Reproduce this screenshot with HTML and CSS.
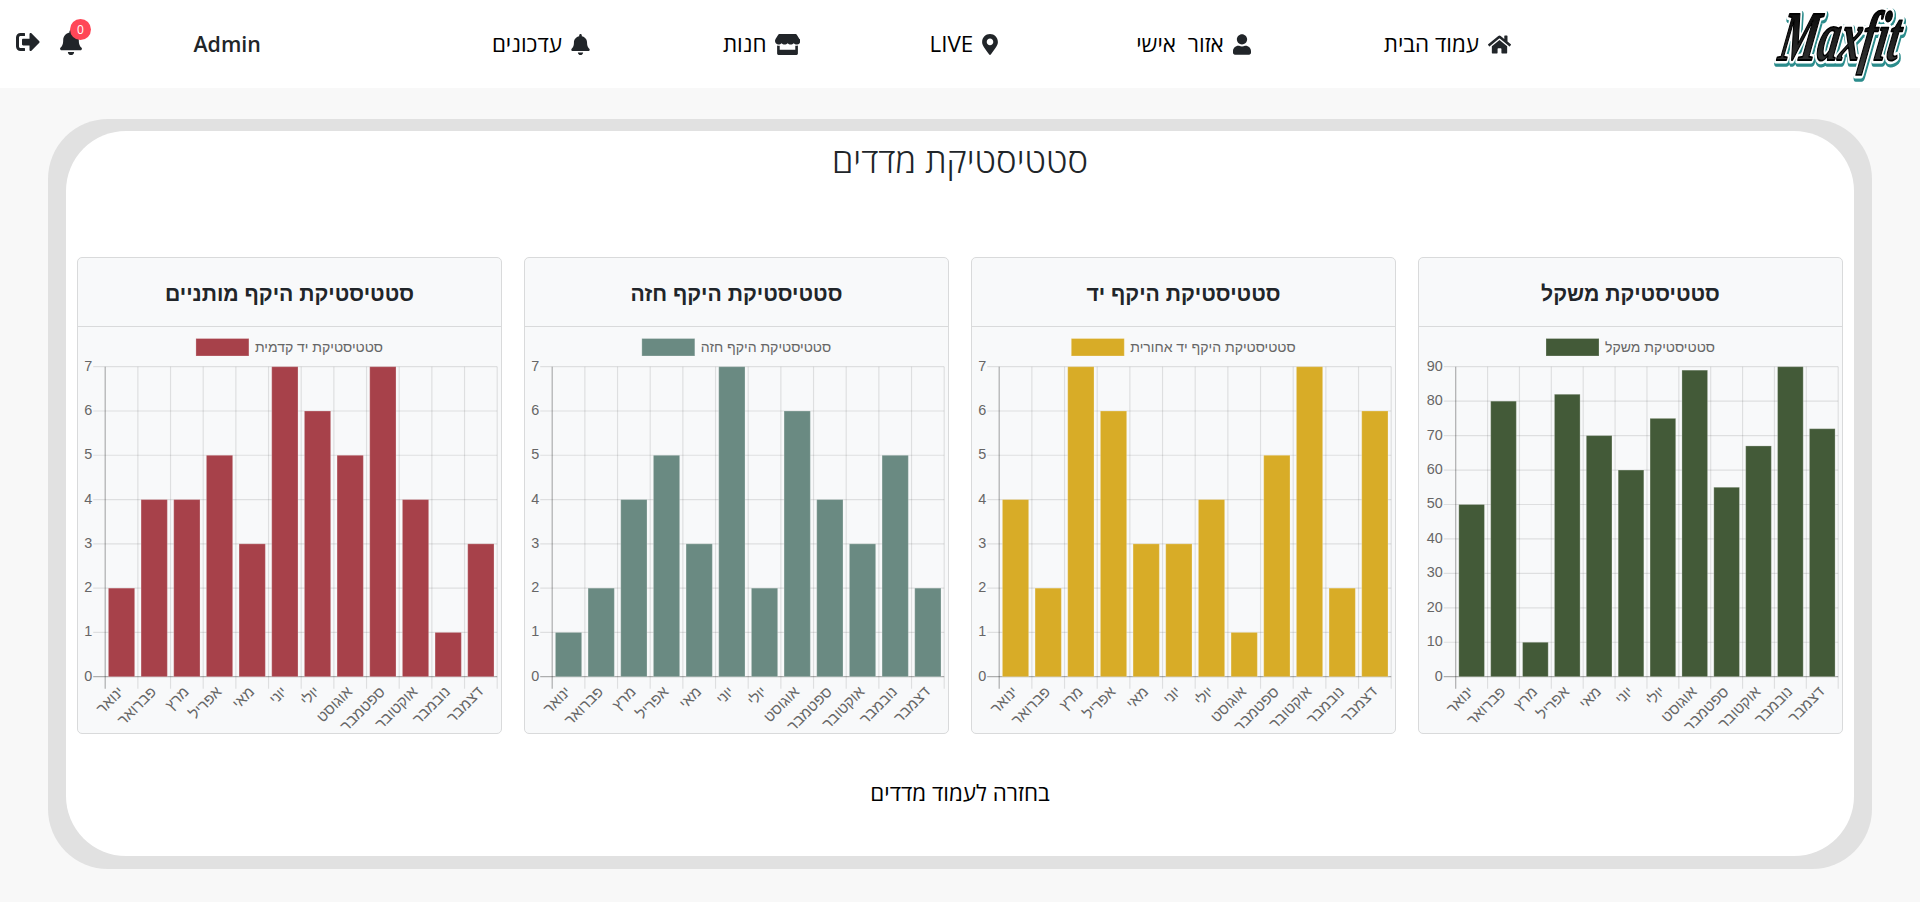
FILE: index.html
```html
<!DOCTYPE html>
<html lang="he" dir="rtl">
<head>
    <meta charset="UTF-8">
    <meta name="viewport" content="width=device-width, initial-scale=1.0">
    <title>סטטיסטיקת מדדים - Maxfit</title>
    <link rel="stylesheet" href="styles.css">
</head>
<body>

    <svg class="icon-defs" xmlns="http://www.w3.org/2000/svg">
        <symbol id="i-home" viewBox="0 0 576 512"><path d="M280.37 148.26L96 300.11V464a16 16 0 0 0 16 16l112.06-.29a16 16 0 0 0 15.92-16V368a16 16 0 0 1 16-16h64a16 16 0 0 1 16 16v95.64a16 16 0 0 0 16 16.05L464 480a16 16 0 0 0 16-16V300L295.67 148.26a12.19 12.19 0 0 0-15.3 0zM571.6 251.47L488 182.56V44.05a12 12 0 0 0-12-12h-56a12 12 0 0 0-12 12v72.61L318.47 43a48 48 0 0 0-61 0L4.34 251.47a12 12 0 0 0-1.6 16.9l25.5 31A12 12 0 0 0 45.15 301l235.22-193.74a12.19 12.19 0 0 1 15.3 0L530.9 301a12 12 0 0 0 16.9-1.6l25.5-31a12 12 0 0 0-1.7-16.93z"/></symbol>
        <symbol id="i-user" viewBox="0 0 448 512"><path d="M224 256c70.7 0 128-57.3 128-128S294.7 0 224 0 96 57.3 96 128s57.3 128 128 128zm89.6 32h-16.7c-22.2 10.2-46.9 16-72.9 16s-50.6-5.8-72.9-16h-16.7C60.2 288 0 348.2 0 422.4V464c0 26.5 21.5 48 48 48h352c26.5 0 48-21.5 48-48v-41.6c0-74.2-60.2-134.4-134.4-134.4z"/></symbol>
        <symbol id="i-marker" viewBox="0 0 384 512"><path d="M172.268 501.67C26.97 291.031 0 268.413 0 192 0 85.961 85.961 0 192 0s192 85.961 192 192c0 76.413-26.97 99.031-172.268 309.67-9.535 13.774-29.93 13.773-39.464 0zM192 272c44.183 0 80-35.817 80-80s-35.817-80-80-80-80 35.817-80 80 35.817 80 80 80z"/></symbol>
        <symbol id="i-store" viewBox="0 0 616 512"><path d="M602 118.6L537.1 15C531.3 5.7 521 0 510 0H106C95 0 84.7 5.7 78.9 15L14 118.6c-33.9 54.1-3.9 129.3 59.4 137.9 4.6.6 9.1.9 13.7.9 29.9 0 56.4-13.1 74.8-33.4 18.4 20.3 45 33.4 74.8 33.4 29.9 0 56.5-13.1 74.8-33.4 18.4 20.3 45 33.4 74.8 33.4 29.9 0 56.4-13.1 74.8-33.4 18.4 20.3 45 33.4 74.8 33.4 4.7 0 9.2-.3 13.7-.9 63.5-8.5 93.6-83.7 59.6-137.9zM529.5 288c-10 0-19.9-1.5-29.5-3.8V384H116v-99.8c-9.6 2.2-19.5 3.8-29.5 3.8-6 0-12.1-.4-18-1.2-5.6-.8-11.1-2.1-16.4-3.6V480c0 17.7 14.3 32 32 32h448c17.7 0 32-14.3 32-32V283.2c-5.4 1.6-10.8 2.9-16.4 3.6-6.1.8-12.1 1.2-18.2 1.2z"/></symbol>
        <symbol id="i-bell" viewBox="0 0 448 512"><path d="M224 512c35.32 0 63.97-28.65 63.97-64H160.03c0 35.35 28.65 64 63.97 64zm215.39-149.71c-19.32-20.76-55.47-51.99-55.47-154.29 0-77.7-54.48-139.9-127.94-155.16V32c0-17.67-14.32-32-31.98-32s-31.98 14.33-31.98 32v20.84C118.56 68.1 64.08 130.3 64.08 208c0 102.3-36.15 133.53-55.47 154.29-6 6.45-8.66 14.16-8.61 21.71.11 16.4 12.98 32 32.1 32h383.8c19.12 0 32-15.6 32.1-32 .05-7.55-2.61-15.27-8.61-21.71z"/></symbol>
        <symbol id="i-exit" viewBox="0 0 512 512"><path d="M497 273L329 441c-15 15-41 4.5-41-17v-96H152c-13.3 0-24-10.7-24-24v-96c0-13.3 10.7-24 24-24h136V88c0-21.4 25.9-32 41-17l168 168c9.3 9.4 9.3 24.6 0 34zM192 436v-40c0-6.6-5.4-12-12-12H96c-17.7 0-32-14.3-32-32V160c0-17.7 14.3-32 32-32h84c6.6 0 12-5.4 12-12V76c0-6.6-5.4-12-12-12H96c-53 0-96 43-96 96v192c0 53 43 96 96 96h84c6.6 0 12-5.4 12-12z"/></symbol>
    </svg>

    <header class="topbar">
        <a class="logo" href="#">
            <svg width="138" height="72" viewBox="0 0 138 72">
                <defs>
                    <linearGradient id="logoFill" x1="0" y1="0" x2="0" y2="1">
                        <stop offset="0" stop-color="#000"/>
                        <stop offset="1" stop-color="#3a3a3a"/>
                    </linearGradient>
                </defs>
                <g transform="translate(6 52) skewX(-10) scale(0.98 1.6)" class="logo-text">
                    <text x="1" y="1" class="logo-teal">Maxfit</text>
                    <text class="logo-white">Maxfit</text>
                    <text class="logo-black" fill="url(#logoFill)">Maxfit</text>
                </g>
            </svg>
        </a>

        <ul class="main-nav">
            <li><a href="#"><svg class="icon icon-home"><use href="#i-home"/></svg>עמוד הבית</a></li>
            <li class="nav-wide"><a href="#"><svg class="icon icon-user"><use href="#i-user"/></svg>אזור אישי</a></li>
            <li class="nav-live"><a href="#"><svg class="icon icon-marker"><use href="#i-marker"/></svg>LIVE</a></li>
            <li><a href="#"><svg class="icon icon-store"><use href="#i-store"/></svg>חנות</a></li>
            <li><a href="#"><svg class="icon icon-bell"><use href="#i-bell"/></svg>עדכונים</a></li>
        </ul>

        <div class="user-name">Admin</div>

        <div class="tools">
            <a class="bell" href="#">
                <svg class="icon"><use href="#i-bell"/></svg>
                <span class="badge">0</span>
            </a>
            <a class="exit" href="#"><svg class="icon"><use href="#i-exit"/></svg></a>
        </div>
    </header>

    <main class="frame">
        <div class="panel">
            <h2 class="page-title">סטטיסטיקת מדדים</h2>

            <div class="cards">
                <section class="card">
                    <h5 class="card-header">סטטיסטיקת משקל</h5>
                    <div class="chart" data-label="סטטיסטיקת משקל" data-color="#435a38" data-max="90" data-step="10" data-left="36.7" data-values="50,80,10,82,70,60,75,89,55,67,90,72"></div>
                </section>
                <section class="card">
                    <h5 class="card-header">סטטיסטיקת היקף יד</h5>
                    <div class="chart" data-label="סטטיסטיקת היקף יד אחורית" data-color="#d8ac27" data-max="7" data-step="1" data-left="27.2" data-values="4,2,7,6,3,3,4,1,5,7,2,6"></div>
                </section>
                <section class="card">
                    <h5 class="card-header">סטטיסטיקת היקף חזה</h5>
                    <div class="chart" data-label="סטטיסטיקת היקף חזה" data-color="#6a8a82" data-max="7" data-step="1" data-left="27.2" data-values="1,2,4,5,3,7,2,6,4,3,5,2"></div>
                </section>
                <section class="card">
                    <h5 class="card-header">סטטיסטיקת היקף מותניים</h5>
                    <div class="chart" data-label="סטטיסטיקת יד קדמית" data-color="#a7414a" data-max="7" data-step="1" data-left="27.2" data-values="2,4,4,5,3,7,6,5,7,4,1,3"></div>
                </section>
            </div>

            <a class="back-link" href="#">בחזרה לעמוד מדדים</a>
        </div>
    </main>

    <script src="charts.js"></script>
</body>
</html>
```

FILE: styles.css
```css
* {
    box-sizing: border-box;
}
body {
    font-family: 'Open Sans', 'Liberation Sans', sans-serif;
    background-color: #f8f8f8;
    color: #212529;
    margin: 0;
}
a {
    color: inherit;
    text-decoration: none;
}
.icon-defs {
    display: none;
}
.icon {
    display: block;
    fill: #212529;
}

/* top bar */
.topbar {
    display: flex;
    align-items: center;
    height: 88px;
    background-color: #fff;
    padding: 0 11px 0 16px;
}
.logo {
    display: block;
    width: 138px;
    height: 72px;
}
.logo svg {
    direction: ltr;
    overflow: visible;
}
.logo-text text {
    font-family: 'Liberation Serif', serif;
    font-weight: bold;
    font-style: italic;
    font-size: 44px;
    stroke-linejoin: round;
}
.logo-teal {
    fill: #2b8c8c;
    stroke: #2b8c8c;
    stroke-width: 6px;
}
.logo-white {
    fill: #fff;
    stroke: #fff;
    stroke-width: 4.5px;
}
.logo-black {
    stroke: #000;
    stroke-width: 1.1px;
}
.main-nav {
    display: flex;
    gap: 133px;
    list-style: none;
    margin: 0 260px 0 0;
    padding: 0;
}
.nav-wide a {
    word-spacing: 6px;
}
.nav-live {
    margin-right: 5px;
    margin-left: -4px;
}
.main-nav a {
    display: flex;
    align-items: center;
    gap: 9px;
    font-size: 22.4px;
    line-height: 30px;
    color: #000;
}
.main-nav .icon {
    height: 21px;
}
.main-nav .icon-home {
    width: 23px;
}
.main-nav .icon-user {
    width: 18px;
}
.main-nav .icon-marker {
    width: 16px;
}
.main-nav .icon-store {
    width: 25px;
}
.main-nav .icon-bell {
    width: 19px;
}
.user-name {
    margin-right: 231px;
    margin-bottom: 2px;
    font-size: 21.4px;
    font-weight: 600;
    color: #212529;
}
.tools {
    display: flex;
    align-items: center;
    gap: 20px;
    margin-right: auto;
    margin-bottom: 4px;
}
.bell {
    position: relative;
    display: block;
}
.bell .icon {
    width: 22px;
    height: 25px;
}
.badge {
    position: absolute;
    top: -11px;
    left: 10px;
    width: 21px;
    height: 21px;
    border-radius: 50%;
    background-color: #ff4757;
    color: #fff;
    font-size: 12px;
    line-height: 21px;
    text-align: center;
}
.exit .icon {
    width: 24px;
    height: 24px;
}

/* main frame */
.frame {
    margin: 31px 48px 0;
    padding: 12px 18px 13px;
    background-color: #e1e1e1;
    border-radius: 60px;
}
.panel {
    display: flex;
    flex-direction: column;
    align-items: center;
    height: 725px;
    background-color: #fff;
    border-radius: 60px;
    padding: 0 11px;
}
.page-title {
    margin: 8px 0 0;
    font-size: 34.7px;
    font-weight: 300;
    line-height: 42px;
    color: #212529;
}
.cards {
    display: flex;
    gap: 22px;
    width: 100%;
    margin-top: 76px;
}
.card {
    flex: 1;
    height: 477px;
    background-color: #f8f9fa;
    border: 1px solid #d9dadb;
    border-radius: 5px;
}
.card-header {
    height: 69px;
    margin: 0;
    border-bottom: 1px solid #d9dadb;
    font-family: 'Liberation Sans', sans-serif;
    font-size: 21.2px;
    font-weight: bold;
    line-height: 71px;
    text-align: center;
}
.chart svg {
    display: block;
    width: 423px;
    height: 407px;
    direction: ltr;
}
.grid-line {
    stroke: rgba(0, 0, 0, 0.1);
    stroke-width: 1.2;
}
.axis-line {
    stroke: rgba(0, 0, 0, 0.3);
    stroke-width: 1.2;
}
.chart-text {
    font-family: 'Liberation Sans', sans-serif;
    fill: #666;
}
.legend-text {
    font-size: 14px;
}
.tick-text {
    font-size: 14.4px;
}
.month-text {
    font-size: 15px;
}
.back-link {
    margin-top: 43px;
    font-size: 22.4px;
    color: #000;
}
```

FILE: charts.js
```js
// Draws the bar charts as inline svg from the data attributes
const SVG_NS = 'http://www.w3.org/2000/svg';
const MONTHS = ['ינואר', 'פברואר', 'מרץ', 'אפריל', 'מאי', 'יוני', 'יולי', 'אוגוסט', 'ספטמבר', 'אוקטובר', 'נובמבר', 'דצמבר'];

const TOP = 39.7;
const BOTTOM = 349.7;
const RIGHT = 419.2;

function add(parent, tag, attrs, text) {
    const el = document.createElementNS(SVG_NS, tag);
    for (let key in attrs) {
        el.setAttribute(key, attrs[key]);
    }
    if (text !== undefined) {
        el.textContent = text;
    }
    parent.appendChild(el);
    return el;
}

function drawChart(box) {
    const values = box.dataset.values.split(',').map(Number);
    const max = Number(box.dataset.max);
    const step = Number(box.dataset.step);
    const left = Number(box.dataset.left);
    const color = box.dataset.color;
    const catWidth = (RIGHT - left) / values.length;

    const svg = add(box, 'svg', { viewBox: '0 0 423 407' });

    // horizontal grid and y labels
    for (let v = 0; v <= max; v += step) {
        const y = BOTTOM - (v / max) * (BOTTOM - TOP);
        add(svg, 'line', { x1: left - 12, x2: RIGHT, y1: y, y2: y, class: v === 0 ? 'axis-line' : 'grid-line' });
        add(svg, 'text', { x: left - 13, y: y + 4, 'text-anchor': 'end', class: 'chart-text tick-text' }, v);
    }

    // vertical grid
    for (let i = 0; i <= values.length; i++) {
        const x = left + i * catWidth;
        add(svg, 'line', { x1: x, x2: x, y1: TOP, y2: BOTTOM + 12, class: i === 0 ? 'axis-line' : 'grid-line' });
    }

    // bars and month labels
    values.forEach(function(value, i) {
        const barWidth = catWidth * 0.805;
        const x = left + i * catWidth + (catWidth - barWidth) / 2;
        const y = BOTTOM - (value / max) * (BOTTOM - TOP);
        add(svg, 'rect', { x: x, y: y, width: barWidth, height: BOTTOM - y, fill: color, stroke: 'rgba(255, 255, 255, 0.25)' });

        const cx = left + i * catWidth + catWidth / 2 + 3;
        const cy = BOTTOM + 16;
        add(svg, 'text', {
            x: cx,
            y: cy,
            'text-anchor': 'end',
            transform: 'rotate(-45 ' + cx + ' ' + cy + ')',
            class: 'chart-text month-text'
        }, MONTHS[i]);
    });

    // legend, centered above the plot
    const label = add(svg, 'text', { y: 25, class: 'chart-text legend-text' }, box.dataset.label);
    const textWidth = label.getComputedTextLength();
    const startX = (423 - (53 + 6 + textWidth)) / 2;
    add(svg, 'rect', { x: startX, y: 11.5, width: 53, height: 17.5, fill: color, stroke: 'rgba(255, 255, 255, 0.25)' });
    label.setAttribute('x', startX + 59);
}

document.querySelectorAll('.chart').forEach(drawChart);
```
